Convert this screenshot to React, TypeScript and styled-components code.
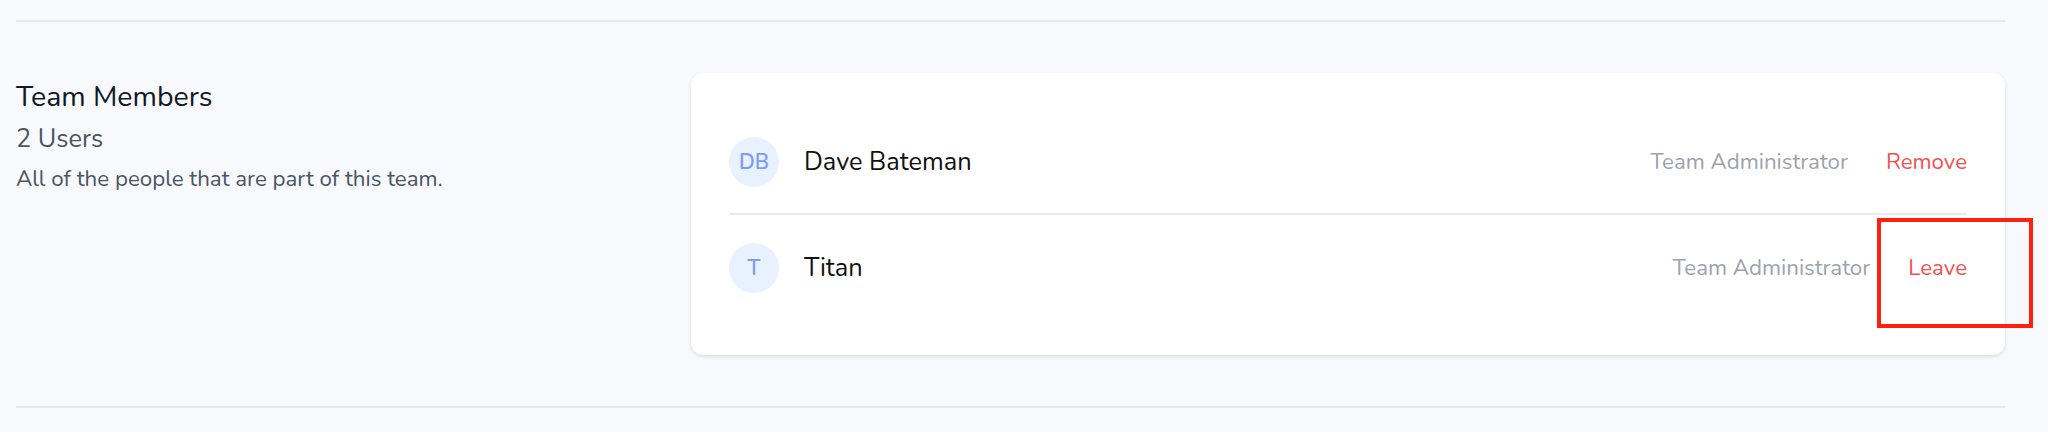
import React from "react";
import styled, { createGlobalStyle } from "styled-components";

const GlobalStyle = createGlobalStyle`
  html, body {
    margin: 0;
    padding: 0;
    background: #f7f9fd;
  }
  body {
    font-family: "Nunito", "Lato", "Open Sans", sans-serif;
    -webkit-font-smoothing: antialiased;
  }
`;

const Page = styled.div`
  position: relative;
  width: 1989px;
  padding: 0 43px 0 16px;
  height: 432px;
  overflow: hidden;
`;

const SectionBorder = styled.div<{ $top: number; $bottom: number }>`
  padding-top: ${(p) => p.$top}px;
  padding-bottom: ${(p) => p.$bottom}px;
  &::after {
    content: "";
    display: block;
    border-top: 2px solid #e6e8ee;
  }
`;

const Section = styled.section`
  display: grid;
  grid-template-columns: repeat(3, minmax(0, 1fr));
  column-gap: 36px;
  align-items: start;
`;

const Intro = styled.div`
  display: flex;
  flex-direction: column;
  padding-top: 3px;
`;

const Title = styled.h3`
  margin: 0;
  font-size: 28.5px;
  line-height: 42px;
  font-weight: 400;
  color: #111827;
`;

const Count = styled.p`
  margin: 3px 0 0;
  font-size: 25.4px;
  line-height: 36px;
  color: #4b5563;
`;

const Description = styled.p`
  margin: 7px 0 0;
  font-size: 22.3px;
  line-height: 30px;
  color: #4b5563;
`;

const Card = styled.div`
  grid-column: span 2;
  background: #ffffff;
  border-radius: 12px;
  padding: 36px 38px;
  box-shadow: 0 2px 4px rgba(0, 0, 0, 0.08), 0 1px 3px rgba(0, 0, 0, 0.06);
`;

const MemberList = styled.div`
  display: flex;
  flex-direction: column;
`;

const MemberRow = styled.div`
  display: flex;
  align-items: center;
  justify-content: space-between;
  padding: 28px 0 26px;
  & + & {
    border-top: 2px solid #e8eaf0;
  }
`;

const Identity = styled.div`
  display: flex;
  align-items: center;
`;

const Avatar = styled.div`
  width: 50px;
  height: 50px;
  border-radius: 50%;
  background: #e8f1fe;
  color: #7f9cf5;
  display: flex;
  align-items: center;
  justify-content: center;
  font-size: 21px;
  font-weight: 600;
  flex-shrink: 0;
`;

const Name = styled.div`
  margin-left: 25px;
  font-size: 25.4px;
  line-height: 36px;
  color: #111111;
`;

const Actions = styled.div`
  display: flex;
  align-items: center;
`;

const Role = styled.div`
  font-size: 22.3px;
  line-height: 30px;
  color: #9ca3af;
`;

const DangerButton = styled.button`
  margin-left: 38px;
  padding: 0;
  border: none;
  background: none;
  cursor: pointer;
  font-family: inherit;
  font-size: 22.3px;
  line-height: 30px;
  color: #f05252;
`;

const Highlight = styled.div`
  position: absolute;
  left: 1877px;
  top: 218px;
  width: 156px;
  height: 110px;
  box-sizing: border-box;
  border: 4px solid #ff200f;
  pointer-events: none;
`;

const members = [
  { initials: "DB", name: "Dave Bateman", role: "Team Administrator", action: "Remove" },
  { initials: "T", name: "Titan", role: "Team Administrator", action: "Leave" },
];

export default function App() {
  return (
    <>
      <GlobalStyle />
      <Page>
        <SectionBorder $top={20} $bottom={51} />
        <Section>
          <Intro>
            <Title>Team Members</Title>
            <Count>2 Users</Count>
            <Description>All of the people that are part of this team.</Description>
          </Intro>
          <Card>
            <MemberList>
              {members.map((m) => (
                <MemberRow key={m.name}>
                  <Identity>
                    <Avatar>{m.initials}</Avatar>
                    <Name>{m.name}</Name>
                  </Identity>
                  <Actions>
                    <Role>{m.role}</Role>
                    <DangerButton>{m.action}</DangerButton>
                  </Actions>
                </MemberRow>
              ))}
            </MemberList>
          </Card>
        </Section>
        <SectionBorder $top={51} $bottom={20} />
        <Highlight />
      </Page>
    </>
  );
}
